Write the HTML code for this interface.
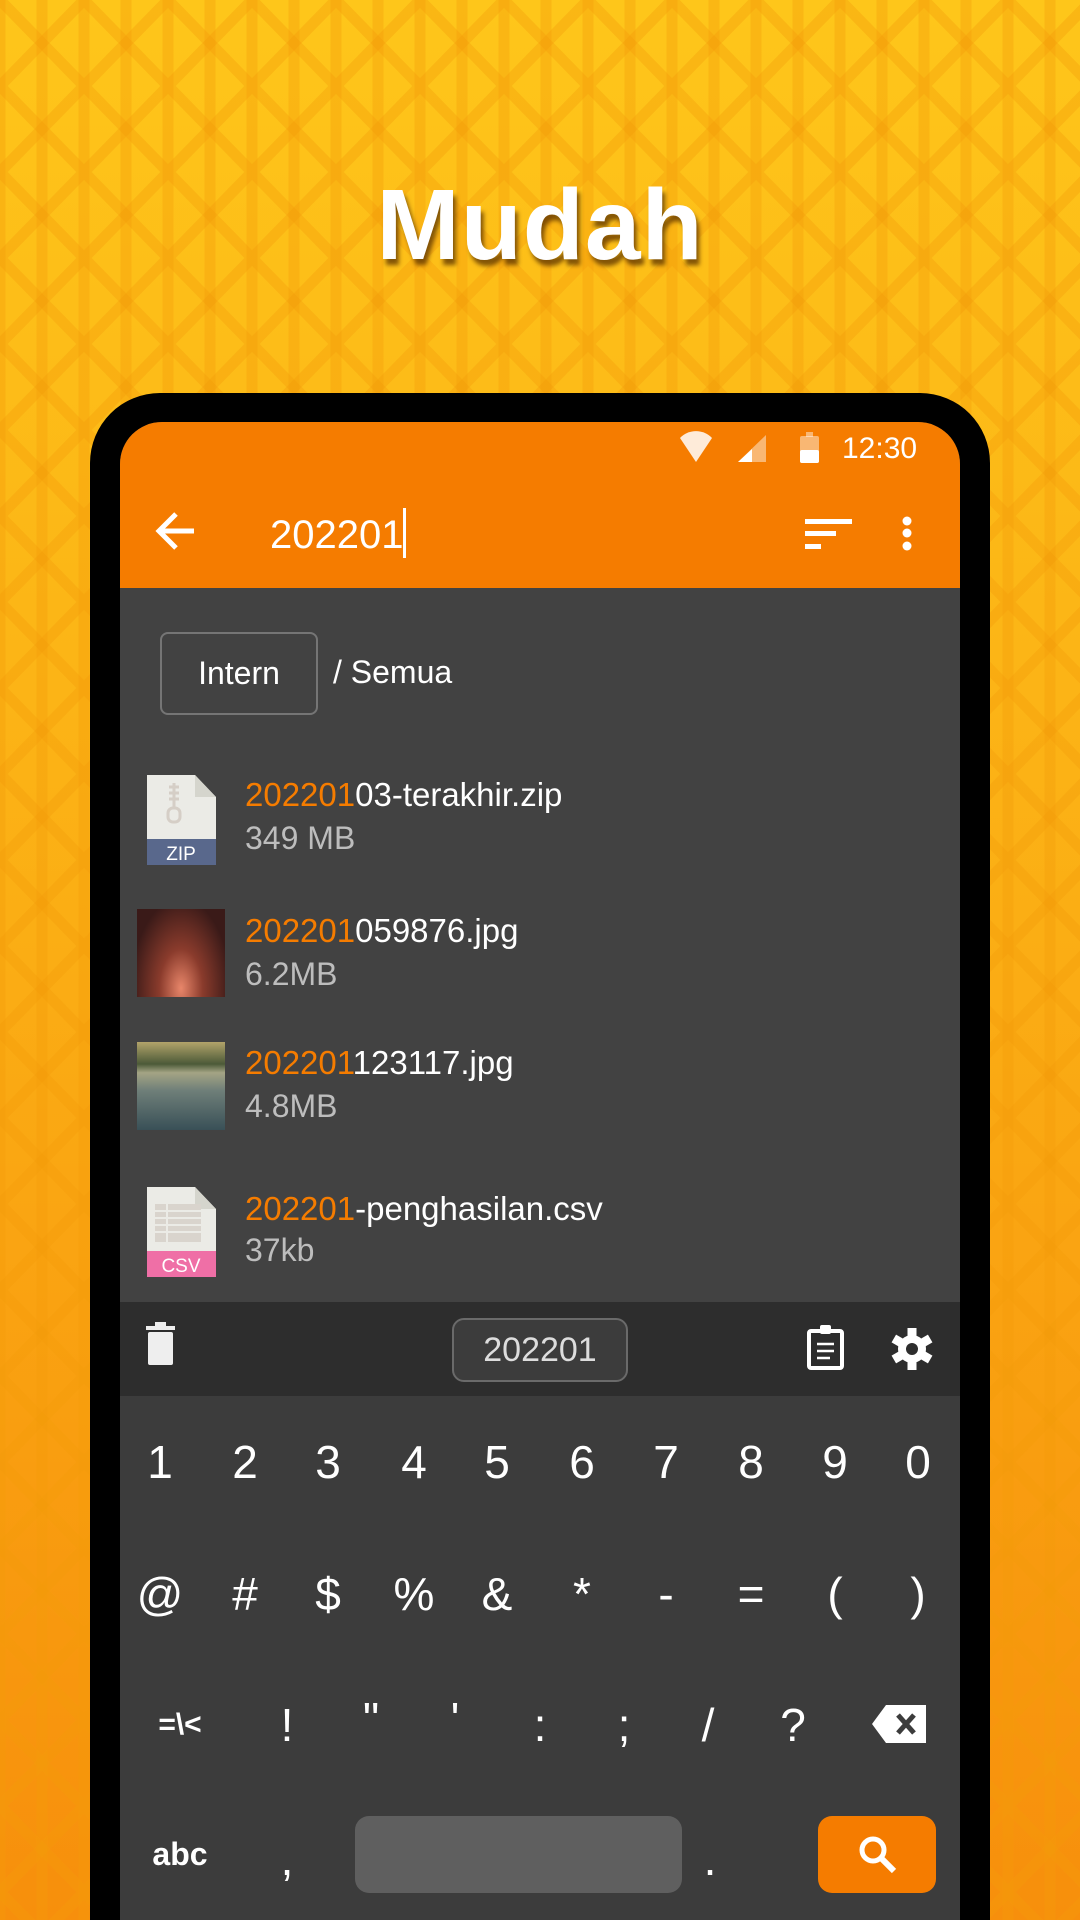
<!DOCTYPE html>
<html><head><meta charset="utf-8"><style>
*{margin:0;padding:0;box-sizing:border-box}
html,body{width:1080px;height:1920px;overflow:hidden;background:#f8980e}
.wrap{position:absolute;left:0;top:0;width:1080px;height:1920px;overflow:hidden;font-family:"Liberation Sans",sans-serif;background:linear-gradient(#fec61a,#fbad14 50%,#f78f0c)}
.abs{position:absolute}
.title{left:0;width:1080px;top:168px;text-align:center;font-size:100px;font-weight:bold;color:#fff;text-shadow:3px 6px 4px rgba(90,50,0,.75);letter-spacing:1px}
.frame{left:90px;top:393px;width:900px;height:1527px;background:#000;border-radius:70px 70px 0 0}
.screen{left:120px;top:422px;width:840px;height:1498px;background:#424242;border-radius:42px 42px 0 0;overflow:hidden}
.bar{left:0;top:0;width:840px;height:166px;background:#f57c00}
.w{color:#fff}
.name{font-size:33px;color:#fff;left:125px}
.name b{font-weight:normal;color:#f57c00}
.size{font-size:32px;color:#bdbdbd;left:125px}
.key{position:absolute;width:80px;text-align:center;color:#fff;font-family:"Liberation Sans Narrow","Liberation Sans",sans-serif;font-size:46px}
</style></head><body><div class="wrap">
<svg class="abs" style="left:0;top:0" width="1080" height="1920">
<defs><pattern id="p" width="84" height="86" patternUnits="userSpaceOnUse">
<g stroke="#f39a08" stroke-opacity=".35" stroke-width="11" fill="none">
<line x1="0" y1="0" x2="0" y2="86"/><line x1="42" y1="0" x2="42" y2="86"/><line x1="84" y1="0" x2="84" y2="86"/>
<line x1="0" y1="0" x2="84" y2="86"/><line x1="84" y1="0" x2="0" y2="86"/>
</g></pattern></defs>
<rect width="1080" height="1920" fill="url(#p)"/>
</svg>
<div class="abs title">Mudah</div>
<div class="abs frame"></div>
<div class="abs screen">
 <div class="abs bar"></div>
 <svg class="abs" style="left:0;top:0" width="840" height="166">
  <path d="M560 16 A22 22 0 0 1 592 16 L576 40 Z" fill="#fff" opacity=".85"/>
  <path d="M618 40 L646 13 L646 40 Z" fill="#fff" opacity=".45"/><path d="M618 40 L632 27 L632 40 Z" fill="#fff"/>
  <rect x="680" y="14" width="19" height="27" rx="2" fill="#fff" opacity=".45"/><rect x="680" y="28" width="19" height="13" rx="2" fill="#fff"/><rect x="686" y="10" width="7" height="5" fill="#fff" opacity=".45"/>
  <path d="M74 109 L40 109 M56 92 L39 109 L56 126" stroke="#fff" stroke-width="5" fill="none"/>
  <rect x="685" y="97" width="47" height="5" fill="#fff"/><rect x="685" y="109" width="31" height="5" fill="#fff"/><rect x="685" y="122" width="16" height="5" fill="#fff"/>
  <circle cx="787" cy="99" r="4.5" fill="#fff"/><circle cx="787" cy="111" r="4.5" fill="#fff"/><circle cx="787" cy="124" r="4.5" fill="#fff"/>
 </svg>
 <div class="abs w" style="left:722px;top:10px;font-size:30px">12:30</div>
 <div class="abs w" style="left:150px;top:86px;font-size:40px">202201<span style="display:inline-block;width:3px;height:50px;background:#fff;vertical-align:-10px"></span></div>
 <div class="abs" style="left:40px;top:210px;width:158px;height:83px;border:2px solid #757575;border-radius:8px;color:#fff;font-size:32px;text-align:center;line-height:79px">Intern</div>
 <div class="abs w" style="left:213px;top:232px;font-size:32px">/ Semua</div>
 <svg class="abs" style="left:27px;top:353px" width="70" height="90"><path d="M0 0 H48 L69 22 V90 H0 Z" fill="#ebebe6"/><path d="M48 0 L69 22 H48 Z" fill="#d5d5cd"/><rect y="64" width="69" height="26" fill="#59688c"/><text x="34" y="85" font-size="19" fill="#fff" text-anchor="middle" font-family="Liberation Sans">ZIP</text><path d="M27 8 V32 M22 12 H32 M22 18 H32 M22 24 H32" stroke="#d5cec6" stroke-width="3"/><rect x="21" y="33" width="12" height="14" rx="5" fill="none" stroke="#d5cec6" stroke-width="3"/></svg>
 <div class="abs name" style="top:354px"><b>202201</b>03-terakhir.zip</div>
 <div class="abs size" style="top:398px">349 MB</div>
 <div class="abs" style="left:17px;top:487px;width:88px;height:88px;background:radial-gradient(ellipse at 50% 90%,#e8866a 0,#8a3b2c 35%,#3a1a18 80%)"></div>
 <div class="abs name" style="top:490px"><b>202201</b>059876.jpg</div>
 <div class="abs size" style="top:534px">6.2MB</div>
 <div class="abs" style="left:17px;top:620px;width:88px;height:88px;background:linear-gradient(#b2a36a 0,#4c5a38 25%,#a4a484 35%,#6f7f79 55%,#395057 100%)"></div>
 <div class="abs name" style="top:622px"><b>202201</b>123117.jpg</div>
 <div class="abs size" style="top:666px">4.8MB</div>
 <svg class="abs" style="left:27px;top:765px" width="70" height="90"><path d="M0 0 H48 L69 22 V90 H0 Z" fill="#ebebe6"/><path d="M48 0 L69 22 H48 Z" fill="#d5d5cd"/><rect y="64" width="69" height="26" fill="#ef6fa6"/><text x="34" y="85" font-size="19" fill="#fff" text-anchor="middle" font-family="Liberation Sans">CSV</text><rect x="8" y="17" width="46" height="38" fill="#d9d4cd"/><path d="M8 24 H54 M8 31 H54 M8 38 H54 M8 45 H54 M20 17 V55" stroke="#ebebe6" stroke-width="2"/></svg>
 <div class="abs name" style="top:768px"><b>202201</b>-penghasilan.csv</div>
 <div class="abs size" style="top:810px">37kb</div>
 <div class="abs" style="left:0;top:880px;width:840px;height:94px;background:#2d2d2d"></div>
 <div class="abs" style="left:0;top:974px;width:840px;height:524px;background:#3c3c3c"></div>
 <div class="abs" style="left:332px;top:896px;width:176px;height:64px;border:2px solid #6a6a6a;border-radius:12px;background:#3c3c3c;color:#ddd;font-size:34px;text-align:center;line-height:60px">202201</div>
 <svg class="abs" style="left:0;top:880px" width="840" height="94">
  <rect x="28" y="30" width="25" height="33" rx="2" fill="#eee"/><rect x="26" y="24" width="29" height="4" fill="#eee"/><rect x="35" y="20" width="11" height="4" fill="#eee"/>
  <rect x="689" y="29" width="33" height="37" rx="2" fill="none" stroke="#fff" stroke-width="4"/><rect x="700" y="23" width="11" height="9" rx="2" fill="#fff"/><path d="M697 42 H714 M697 49 H714 M697 56 H710" stroke="#fff" stroke-width="2.5"/>
  <g transform="translate(792,47)" fill="#fff"><circle r="14"/><g><rect x="-4.5" y="-21" width="9" height="10"/><rect x="-4.5" y="-21" width="9" height="10" transform="rotate(60)"/><rect x="-4.5" y="-21" width="9" height="10" transform="rotate(120)"/><rect x="-4.5" y="-21" width="9" height="10" transform="rotate(180)"/><rect x="-4.5" y="-21" width="9" height="10" transform="rotate(240)"/><rect x="-4.5" y="-21" width="9" height="10" transform="rotate(300)"/></g><circle r="6" fill="#2d2d2d"/></g>
 </svg>
 <div class="key" style="left:0px;top:1013px">1</div><div class="key" style="left:85px;top:1013px">2</div><div class="key" style="left:168px;top:1013px">3</div><div class="key" style="left:254px;top:1013px">4</div><div class="key" style="left:337px;top:1013px">5</div><div class="key" style="left:422px;top:1013px">6</div><div class="key" style="left:506px;top:1013px">7</div><div class="key" style="left:591px;top:1013px">8</div><div class="key" style="left:675px;top:1013px">9</div><div class="key" style="left:758px;top:1013px">0</div>
 <div class="key" style="left:0px;top:1145px">@</div><div class="key" style="left:85px;top:1145px">#</div><div class="key" style="left:168px;top:1145px">$</div><div class="key" style="left:254px;top:1145px">%</div><div class="key" style="left:337px;top:1145px">&amp;</div><div class="key" style="left:422px;top:1145px">*</div><div class="key" style="left:506px;top:1145px">-</div><div class="key" style="left:591px;top:1145px">=</div><div class="key" style="left:675px;top:1145px">(</div><div class="key" style="left:758px;top:1145px">)</div>
 <div class="key" style="left:20px;top:1286px;font-size:30px;font-weight:bold">=\&lt;</div><div class="key" style="left:127px;top:1276px">!</div><div class="key" style="left:211px;top:1270px">"</div><div class="key" style="left:295px;top:1270px">'</div><div class="key" style="left:380px;top:1276px">:</div><div class="key" style="left:464px;top:1276px">;</div><div class="key" style="left:548px;top:1276px">/</div><div class="key" style="left:633px;top:1276px">?</div>
 <svg class="abs" style="left:752px;top:1283px" width="56" height="40"><path d="M14 0 H54 V38 H14 L0 19 Z" fill="#fff"/><path d="M26 10 L42 28 M42 10 L26 28" stroke="#3c3c3c" stroke-width="5"/></svg>
 <div class="key" style="left:20px;top:1414px;font-size:32px;font-weight:bold">abc</div><div class="key" style="left:127px;top:1410px">,</div><div class="key" style="left:550px;top:1410px">.</div>
 <div class="abs" style="left:235px;top:1394px;width:327px;height:77px;background:#5f5f5f;border-radius:14px"></div>
 <div class="abs" style="left:698px;top:1394px;width:118px;height:77px;background:#f57c00;border-radius:14px"></div>
 <svg class="abs" style="left:738px;top:1413px" width="40" height="40"><circle cx="15" cy="15" r="11" fill="none" stroke="#fff" stroke-width="5"/><path d="M23 23 L36 36" stroke="#fff" stroke-width="6"/></svg>
</div>
</div></body></html>
